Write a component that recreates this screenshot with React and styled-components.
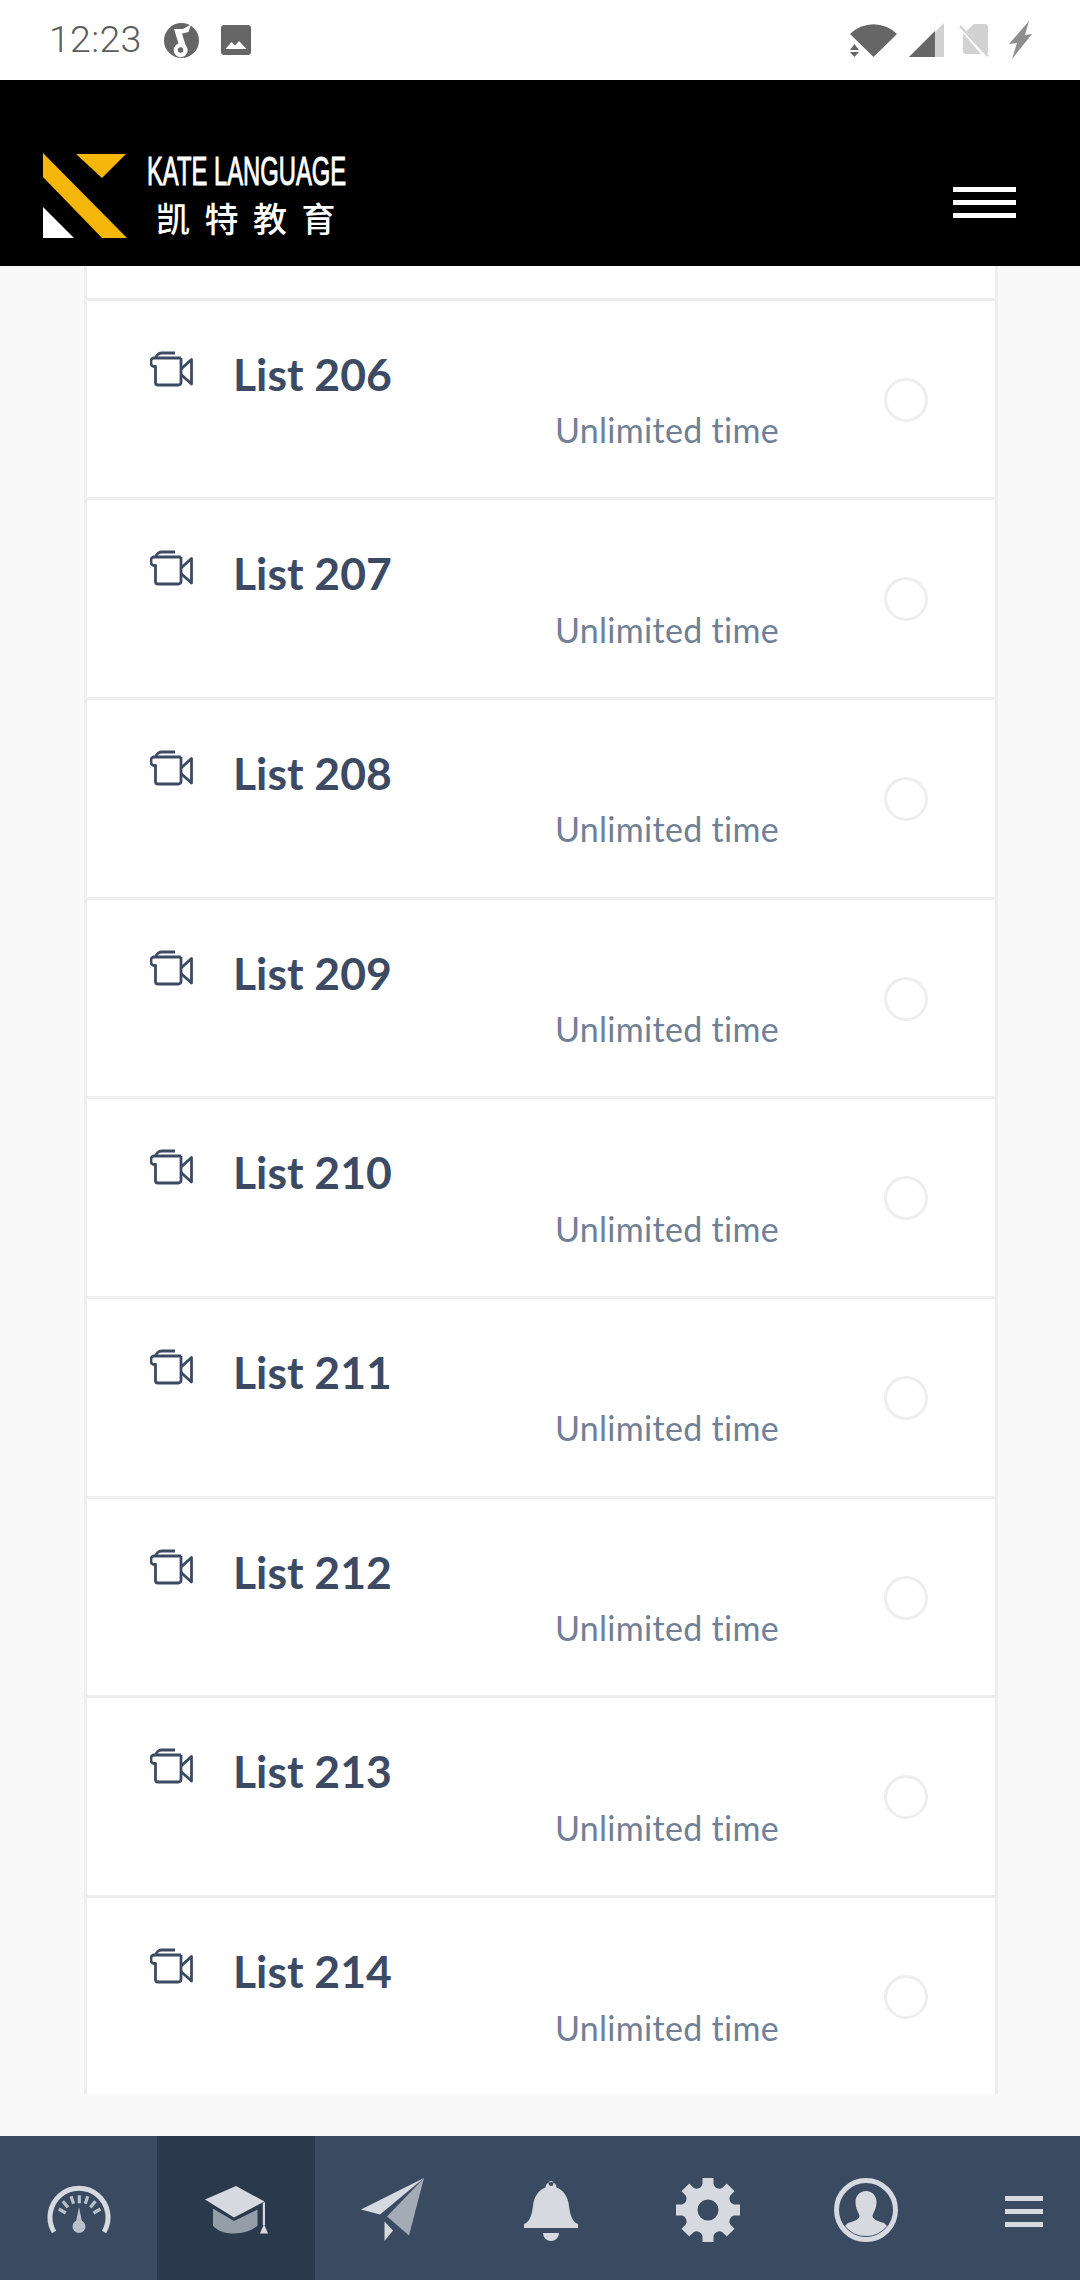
import React from "react";
import styled, { createGlobalStyle } from "styled-components";

const Global = createGlobalStyle`
  html, body { margin: 0; padding: 0; background: #f9f9f9; }
  * { box-sizing: border-box; }
`;
const Screen = styled.div`
  width: 1080px; height: 2280px; display: flex; flex-direction: column; overflow: hidden;
  font-family: "Lato", "Noto Sans", sans-serif;
`;
const StatusBar = styled.div`
  height: 80px; flex: none; background: #fff; display: flex; align-items: center; justify-content: space-between;
  padding: 0 48px 0 49px;
`;
const StatusGroup = styled.div`display: flex; align-items: center;`;
const StatusGlyph = styled.span`display: flex; margin-right: ${p => p.$after || 0}px;`;
const Clock = styled.span`
  font-family: "Roboto", sans-serif; font-weight: 300; font-size: 37.5px; color: #5c5c5c; letter-spacing: 0.3px; margin-right: 22px; line-height: 1;
`;
const Header = styled.header`
  height: 186px; flex: none; background: #000; display: flex; align-items: flex-end; justify-content: space-between;
  padding: 0 64px 28px 43px;
`;
const Logo = styled.div`display: flex; align-items: flex-end; gap: 20px;`;
const LogoText = styled.div`width: 199px; height: 85px; display: flex; flex-direction: column; color: #fff;`;
const LogoLatin = styled.span`
  font-family: "Liberation Sans", sans-serif; font-size: 41px; line-height: 37px; white-space: nowrap; display: inline-block;
  transform: scaleX(0.58); transform-origin: left center; font-weight: 400; -webkit-text-stroke: 1px #fff;
`;
const LogoCjk = styled.span`
  font-family: "Noto Sans CJK SC", sans-serif; font-size: 34px; line-height: 36px; letter-spacing: 14.5px; white-space: nowrap; padding-left: 9px; margin-top: 10px; font-weight: 500;
`;
const Burger = styled.div`display: flex; flex-direction: column; gap: 8px; margin-bottom: 20px;`;
const BurgerBar = styled.span`display: block; width: 63px; height: 5px; background: #fff;`;
const Content = styled.main`
  height: 1870px; flex: none; background: #f9f9f9; padding: 0 82px 42px 84px;
`;
const Panel = styled.div`
  height: 100%; background: #fff; border-left: 3px solid #eee; border-right: 3px solid #eee; overflow: hidden;
`;
const RowStub = styled.div`height: 34.5px; border-bottom: 3px solid #eee;`;
const Row = styled.div`
  height: 199.7px; flex: none; border-bottom: 3px solid #eee; display: flex; align-items: flex-start; padding-left: 63px;
`;
const IconSlot = styled.div`width: 83px; flex: none; padding-top: 50px; display: flex;`;
const RowBody = styled.div`width: 546px; flex: none; display: flex; flex-direction: column; padding-top: 48px;`;
const RowTitle = styled.div`font-size: 44.5px; line-height: 50px; font-weight: 700; color: #3c4b63;`;
const RowTime = styled.div`font-size: 34px; line-height: 44px; font-weight: 400; color: #718096; text-align: right; margin-top: 9.5px; letter-spacing: 0.3px;`;
const Radio = styled.span`
  width: 44px; height: 44px; flex: none; border: 3px solid #eee; border-radius: 50%; margin: 77px 0 0 105px; display: block;
`;
const Nav = styled.nav`height: 144px; flex: none; background: #3a4b61; display: flex; overflow: hidden;`;
const NavItem = styled.div`
  width: 157.4px; flex: none; display: flex; justify-content: center; padding-top: 42px; background: ${p => (p.$active ? "#2a394b" : "transparent")};
`;

const LIGHT = "#d6dae0", MID = "#a3abb7";

const gearPath = (() => {
  const pt = (r, off, a) => {
    const c = Math.cos(a), s = Math.sin(a);
    return `${(32 + r * c - off * s).toFixed(2)} ${(32 + r * s + off * c).toFixed(2)}`;
  };
  let d = "";
  for (let i = 0; i < 8; i++) {
    const a = (i * Math.PI) / 4 - Math.PI / 2;
    const n = a + Math.PI / 4;
    d += `${i === 0 ? "M" : "L"}${pt(32, -5.5, a)} L${pt(32, 5.5, a)} L${pt(26, 5.5, a)} A6 6 0 0 0 ${pt(26, -5.5, n)} `;
  }
  return d + "Z";
})();

const CameraIcon = () => (
  <svg width="43" height="36" viewBox="0 0 43 35" fill="none" stroke="#3c4b63" strokeWidth="2.800" strokeLinejoin="round">
    <path d="M31 6.500H4a3 3 0 0 0-3 3v2.500a3 3 0 0 0 3 3h1.500V31a2.500 2.500 0 0 0 2.500 2.500h20.500a2.500 2.500 0 0 0 2.500-2.500V6.500" />
    <path d="M6 6.500A5.500 5.500 0 0 1 11.500 1.500H25" />
    <path d="M31 17.500 41.500 8v24.500L31 23" />
  </svg>
);
const MusicGlobe = () => (
  <svg width="35" height="35" viewBox="0 0 35 35">
    <circle cx="17.500" cy="17.500" r="17.500" fill="#666" />
    <path d="M10 6H19L27 1.500 24.500 9 18 10.500 21.500 22A7 7 0 1 1 14.500 20.500Z" fill="#fff" />
    <circle cx="16.500" cy="27" r="2.700" fill="#666" />
  </svg>
);
const ImageIcon = () => (
  <svg width="30" height="30" viewBox="0 0 30 30">
    <rect width="30" height="30" rx="3" fill="#666" />
    <path d="M4.500 24 10.500 17l3.500 3.500 4-4.500L25.500 24Z" fill="#fff" />
  </svg>
);
const WifiIcon = () => (
  <svg width="47" height="34" viewBox="0 0 47 34">
    <path d="M0 11A33 33 0 0 1 47 11L23.500 34Z" fill="#666" />
    <path d="M4.500 21 9 27H0ZM0 29H9L4.500 34Z" fill="#666" />
  </svg>
);
const SignalIcon = () => (
  <svg width="35" height="34" viewBox="0 0 35 34">
    <path d="M0 34 35 0V34Z" fill="#d2d2d2" />
    <path d="M0 34 26 8V34Z" fill="#666" />
  </svg>
);
const SimIcon = () => (
  <svg width="31" height="33" viewBox="0 0 31 33">
    <path d="M15 0H26a3 3 0 0 1 3 3V27a3 3 0 0 1-3 3H7a3 3 0 0 1-3-3V10Z" fill="#d2d2d2" />
    <path d="M-1 0 27 33" stroke="#fff" strokeWidth="4" />
    <path d="M1 2 29 32" stroke="#d2d2d2" strokeWidth="2.500" />
  </svg>
);
const BoltIcon = () => (
  <svg width="23" height="38" viewBox="0 0 23 38"><path d="M20 0 16 14 23 13 3 38 8 22 0 23Z" fill="#8e8e8e" /></svg>
);
const LogoMark = () => (
  <svg width="84" height="85" viewBox="0 0 84 85">
    <path d="M0 0V24L59 85H84Z" fill="#f5b60a" />
    <path d="M33 1H83L59 25Z" fill="#f5b60a" />
    <path d="M0 54V85H31Z" fill="#fff" />
  </svg>
);
const Ticks = [[15.3,33,-60],[18.4,26.3,-40],[25.3,22,-18],[32.3,21.3,0],[39.5,22,18],[45.9,26.3,40],[50,33,60]];
const DashIcon = () => (
  <svg width="64" height="64" viewBox="0 0 64 64">
    <path d="M7 54A29 29 0 1 1 57 54" fill="none" stroke={LIGHT} strokeWidth="5" />
    {Ticks.map(([x, y, r]) => (
      <rect key={r} x={x - 1.600} y={y - 4} width="3.200" height="8" fill="#b8c0cb" transform={`rotate(${r} ${x} ${y})`} />
    ))}
    <path d="M32 29 28.500 46H35.500Z" fill="#b8c0cb" />
    <circle cx="32" cy="48.500" r="6.500" fill="#b8c0cb" />
  </svg>
);
const CapIcon = () => (
  <svg width="64" height="64" viewBox="0 0 64 64">
    <g transform="translate(1 0)">
      <path d="M8 30.500 29 43 52.500 31.500V47.500C47 53 38 55.500 29 55.500 20 55.500 12 53 8 47.500Z" fill="#949ea9" />
      <path d="M0 21.500 31 8 59.500 23.500 29 39.500Z" fill={LIGHT} />
      <path d="M57.800 25 60 24V47H57.800Z" fill={LIGHT} />
      <path d="M59 46 63 55.500H55Z" fill={LIGHT} />
    </g>
  </svg>
);
const PlaneIcon = () => (
  <svg width="64" height="64" viewBox="0 0 64 64">
    <path d="M0 31.500 63 0 19 36.500Z" fill={LIGHT} />
    <path d="M63 0 26 38.500 48 57.500Z" fill={MID} />
    <path d="M23.500 43.500 32 52.500 23.500 63Z" fill={LIGHT} />
  </svg>
);
const BellIcon = () => (
  <svg width="64" height="64" viewBox="0 0 64 64">
    <path fillRule="evenodd" d="M5 50V46C11 44 13 36 14 28 15 18 20 12 26.500 9.500A5.500 5.500 0 1 1 37.500 9.500C44 12 49 18 50 28 51 36 53 44 59 46V50ZM32 3A2.500 2.500 0 1 0 32.010 8 2.500 2.500 0 0 0 32 3Z" fill={LIGHT} />
    <path d="M24 55H40A8 8 0 0 1 24 55Z" fill={LIGHT} />
  </svg>
);
const GearIcon = () => (
  <svg width="64" height="64" viewBox="0 0 64 64">
    <path fillRule="evenodd" d={`${gearPath} M32 21.500A10.500 10.500 0 1 0 32.010 42.500 10.500 10.500 0 0 0 32 21.500Z`} fill={LIGHT} />
  </svg>
);
const UserIcon = () => (
  <svg width="64" height="64" viewBox="0 0 64 64">
    <circle cx="32" cy="32" r="29.500" fill="none" stroke={LIGHT} strokeWidth="5" />
    <path d="M32 13C25.500 13 21.500 18 21.500 24 21.500 31 25 35 25.500 38 25.500 41 21 43 14 45L11 48A27 27 0 0 0 53 48L50 45C43 43 38.500 41 38.500 38 39 35 42.500 31 42.500 24 42.500 18 38.500 13 32 13Z" fill={LIGHT} />
  </svg>
);
const MenuIcon = () => (
  <svg width="64" height="64" viewBox="0 0 64 64">
    <path d="M14 18H52V23H14ZM14 31H52V36H14ZM14 44H52V49H14Z" fill={LIGHT} />
  </svg>
);

const rows = [206, 207, 208, 209, 210, 211, 212, 213, 214];
const navIcons = [DashIcon, CapIcon, PlaneIcon, BellIcon, GearIcon, UserIcon, MenuIcon];

export default function App() {
  return (
    <Screen>
      <Global />
      <StatusBar>
        <StatusGroup>
          <Clock>12:23</Clock>
          <StatusGlyph $after={22}><MusicGlobe /></StatusGlyph>
          <StatusGlyph><ImageIcon /></StatusGlyph>
        </StatusGroup>
        <StatusGroup>
          <StatusGlyph $after={12}><WifiIcon /></StatusGlyph>
          <StatusGlyph $after={15}><SignalIcon /></StatusGlyph>
          <StatusGlyph $after={19}><SimIcon /></StatusGlyph>
          <StatusGlyph><BoltIcon /></StatusGlyph>
        </StatusGroup>
      </StatusBar>
      <Header>
        <Logo>
          <LogoMark />
          <LogoText>
            <LogoLatin>KATE LANGUAGE</LogoLatin>
            <LogoCjk>凯特教育</LogoCjk>
          </LogoText>
        </Logo>
        <Burger>
          <BurgerBar />
          <BurgerBar />
          <BurgerBar />
        </Burger>
      </Header>
      <Content>
        <Panel>
          <RowStub />
          {rows.map(n => (
            <Row key={n}>
              <IconSlot><CameraIcon /></IconSlot>
              <RowBody>
                <RowTitle>List {n}</RowTitle>
                <RowTime>Unlimited time</RowTime>
              </RowBody>
              <Radio />
            </Row>
          ))}
        </Panel>
      </Content>
      <Nav>
        {navIcons.map((Icon, i) => (
          <NavItem key={i} $active={i === 1}><Icon /></NavItem>
        ))}
      </Nav>
    </Screen>
  );
}
